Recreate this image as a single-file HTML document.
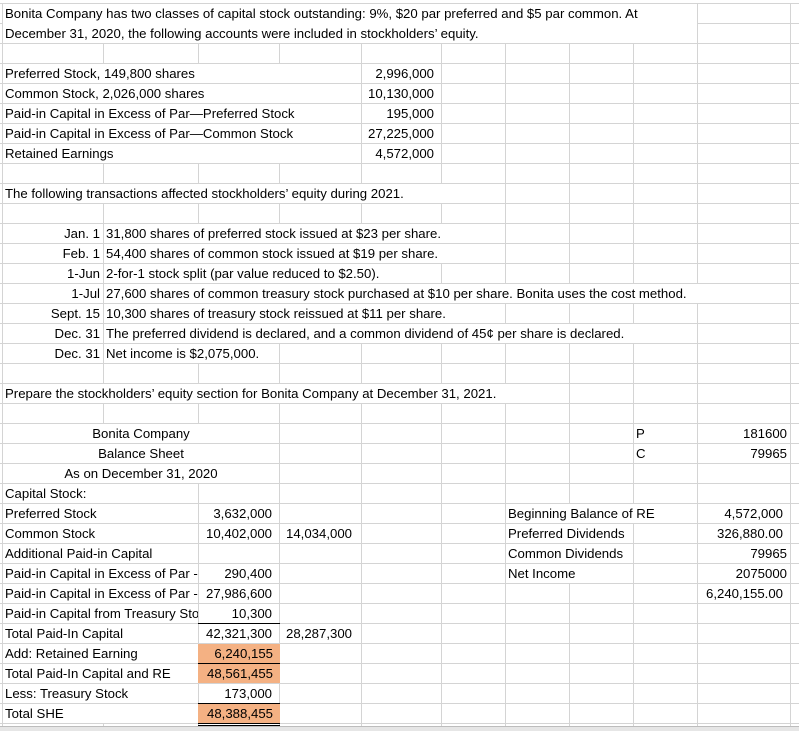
<!DOCTYPE html>
<html><head><meta charset="utf-8"><style>
html,body{margin:0;padding:0}
body{width:799px;height:730px;position:relative;overflow:hidden;background:#fff;font-family:"Liberation Sans",sans-serif;font-size:13.2px;color:#000}
.grid{position:absolute;left:0;top:3px;width:799px;height:723px;background:repeating-linear-gradient(to bottom,#d4d4d4 0,#d4d4d4 1px,transparent 1px,transparent 20px)}
.v{position:absolute;top:3px;height:723px;width:1px;background:#d4d4d4}
.c{position:absolute;height:19px;line-height:20px;background:#fff;white-space:nowrap;padding:0 2px;box-sizing:border-box;overflow:hidden}
.r{text-align:right;padding-right:7px}
.g{text-align:right;padding-right:3px}
.o{background:#f4b183}
.b{position:absolute;left:198px;width:82px;height:1px;background:#000}
</style></head><body>
<div class="grid"></div>
<div class="v" style="left:2px"></div>
<div class="v" style="left:103px"></div>
<div class="v" style="left:198px"></div>
<div class="v" style="left:279px"></div>
<div class="v" style="left:361px"></div>
<div class="v" style="left:441px"></div>
<div class="v" style="left:505px"></div>
<div class="v" style="left:569px"></div>
<div class="v" style="left:633px"></div>
<div class="v" style="left:697px"></div>
<div class="v" style="left:790px"></div>

<div class="c" style="left:3px;top:4px;width:694px;height:39px;line-height:20px;padding-top:0">Bonita Company has two classes of capital stock outstanding: 9%, $20 par preferred and $5 par common. At<br>December 31, 2020, the following accounts were included in stockholders’ equity.</div>

<div class="c" style="left:3px;top:64px;width:358px">Preferred Stock, 149,800 shares</div><div class="c r" style="left:362px;top:64px;width:79px">2,996,000</div>
<div class="c" style="left:3px;top:84px;width:358px">Common Stock, 2,026,000 shares</div><div class="c r" style="left:362px;top:84px;width:79px">10,130,000</div>
<div class="c" style="left:3px;top:104px;width:358px">Paid-in Capital in Excess of Par—Preferred Stock</div><div class="c r" style="left:362px;top:104px;width:79px">195,000</div>
<div class="c" style="left:3px;top:124px;width:358px">Paid-in Capital in Excess of Par—Common Stock</div><div class="c r" style="left:362px;top:124px;width:79px">27,225,000</div>
<div class="c" style="left:3px;top:144px;width:358px">Retained Earnings</div><div class="c r" style="left:362px;top:144px;width:79px">4,572,000</div>

<div class="c" style="left:3px;top:184px;width:502px">The following transactions affected stockholders’ equity during 2021.</div>

<div class="c g" style="left:3px;top:224px;width:100px">Jan. 1</div><div class="c" style="left:104px;top:224px;width:401px">31,800 shares of preferred stock issued at $23 per share.</div>
<div class="c g" style="left:3px;top:244px;width:100px">Feb. 1</div><div class="c" style="left:104px;top:244px;width:401px">54,400 shares of common stock issued at $19 per share.</div>
<div class="c g" style="left:3px;top:264px;width:100px">1-Jun</div><div class="c" style="left:104px;top:264px;width:337px">2-for-1 stock split (par value reduced to $2.50).</div>
<div class="c g" style="left:3px;top:284px;width:100px">1-Jul</div><div class="c" style="left:104px;top:284px;width:686px">27,600 shares of common treasury stock purchased at $10 per share. Bonita uses the cost method.</div>
<div class="c g" style="left:3px;top:304px;width:100px">Sept. 15</div><div class="c" style="left:104px;top:304px;width:401px">10,300 shares of treasury stock reissued at $11 per share.</div>
<div class="c g" style="left:3px;top:324px;width:100px">Dec. 31</div><div class="c" style="left:104px;top:324px;width:593px">The preferred dividend is declared, and a common dividend of 45¢ per share is declared.</div>
<div class="c g" style="left:3px;top:344px;width:100px">Dec. 31</div><div class="c" style="left:104px;top:344px;width:175px">Net income is $2,075,000.</div>

<div class="c" style="left:3px;top:384px;width:566px">Prepare the stockholders’ equity section for Bonita Company at December 31, 2021.</div>

<div class="c" style="left:3px;top:424px;width:276px;text-align:center">Bonita Company</div>
<div class="c" style="left:3px;top:444px;width:276px;text-align:center">Balance Sheet</div>
<div class="c" style="left:3px;top:464px;width:276px;text-align:center">As on December 31, 2020</div>
<div class="c" style="left:634px;top:424px;width:63px">P</div><div class="c g" style="left:698px;top:424px;width:92px">181600</div>
<div class="c" style="left:634px;top:444px;width:63px">C</div><div class="c g" style="left:698px;top:444px;width:92px">79965</div>

<div class="c" style="left:3px;top:484px;width:195px">Capital Stock:</div>
<div class="c" style="left:3px;top:504px;width:195px">Preferred Stock</div><div class="c r" style="left:199px;top:504px;width:80px">3,632,000</div>
<div class="c" style="left:3px;top:524px;width:195px">Common Stock</div><div class="c r" style="left:199px;top:524px;width:80px">10,402,000</div><div class="c r" style="left:280px;top:524px;width:81px;padding-right:9px">14,034,000</div>
<div class="c" style="left:3px;top:544px;width:195px">Additional Paid-in Capital</div>
<div class="c" style="left:3px;top:564px;width:195px">Paid-in Capital in Excess of Par - Preferred</div><div class="c r" style="left:199px;top:564px;width:80px">290,400</div>
<div class="c" style="left:3px;top:584px;width:195px">Paid-in Capital in Excess of Par - Common</div><div class="c r" style="left:199px;top:584px;width:80px">27,986,600</div>
<div class="c" style="left:3px;top:604px;width:195px">Paid-in Capital from Treasury Stock</div><div class="c r" style="left:199px;top:604px;width:80px">10,300</div>
<div class="c" style="left:3px;top:624px;width:195px">Total Paid-In Capital</div><div class="c r" style="left:199px;top:624px;width:80px">42,321,300</div><div class="c r" style="left:280px;top:624px;width:81px;padding-right:9px">28,287,300</div>
<div class="c" style="left:3px;top:644px;width:195px">Add: Retained Earning</div><div class="c r o" style="left:198px;top:644px;width:82px">6,240,155</div>
<div class="c" style="left:3px;top:664px;width:195px">Total Paid-In Capital and RE</div><div class="c r o" style="left:198px;top:664px;width:82px">48,561,455</div>
<div class="c" style="left:3px;top:684px;width:195px">Less: Treasury Stock</div><div class="c r" style="left:199px;top:684px;width:80px">173,000</div>
<div class="c" style="left:3px;top:704px;width:195px">Total SHE</div><div class="c r o" style="left:198px;top:704px;width:82px">48,388,455</div>
<div class="b" style="top:623px"></div>
<div class="b" style="top:663px"></div>
<div class="b" style="top:703px"></div>
<div class="b" style="top:723px"></div>
<div class="b" style="top:725px"></div>

<div class="c" style="left:506px;top:504px;width:191px">Beginning Balance of RE</div><div class="c r" style="left:698px;top:504px;width:92px">4,572,000</div>
<div class="c" style="left:506px;top:524px;width:127px">Preferred Dividends</div><div class="c r" style="left:698px;top:524px;width:92px">326,880.00</div>
<div class="c" style="left:506px;top:544px;width:127px">Common Dividends</div><div class="c g" style="left:698px;top:544px;width:92px">79965</div>
<div class="c" style="left:506px;top:564px;width:127px">Net Income</div><div class="c g" style="left:698px;top:564px;width:92px">2075000</div>
<div class="c r" style="left:698px;top:584px;width:92px">6,240,155.00</div>

<div style="position:absolute;left:0;top:726px;width:799px;height:4px;background:#e6e6e6;border-top:1px solid #bdbdbd"></div>
</body></html>
